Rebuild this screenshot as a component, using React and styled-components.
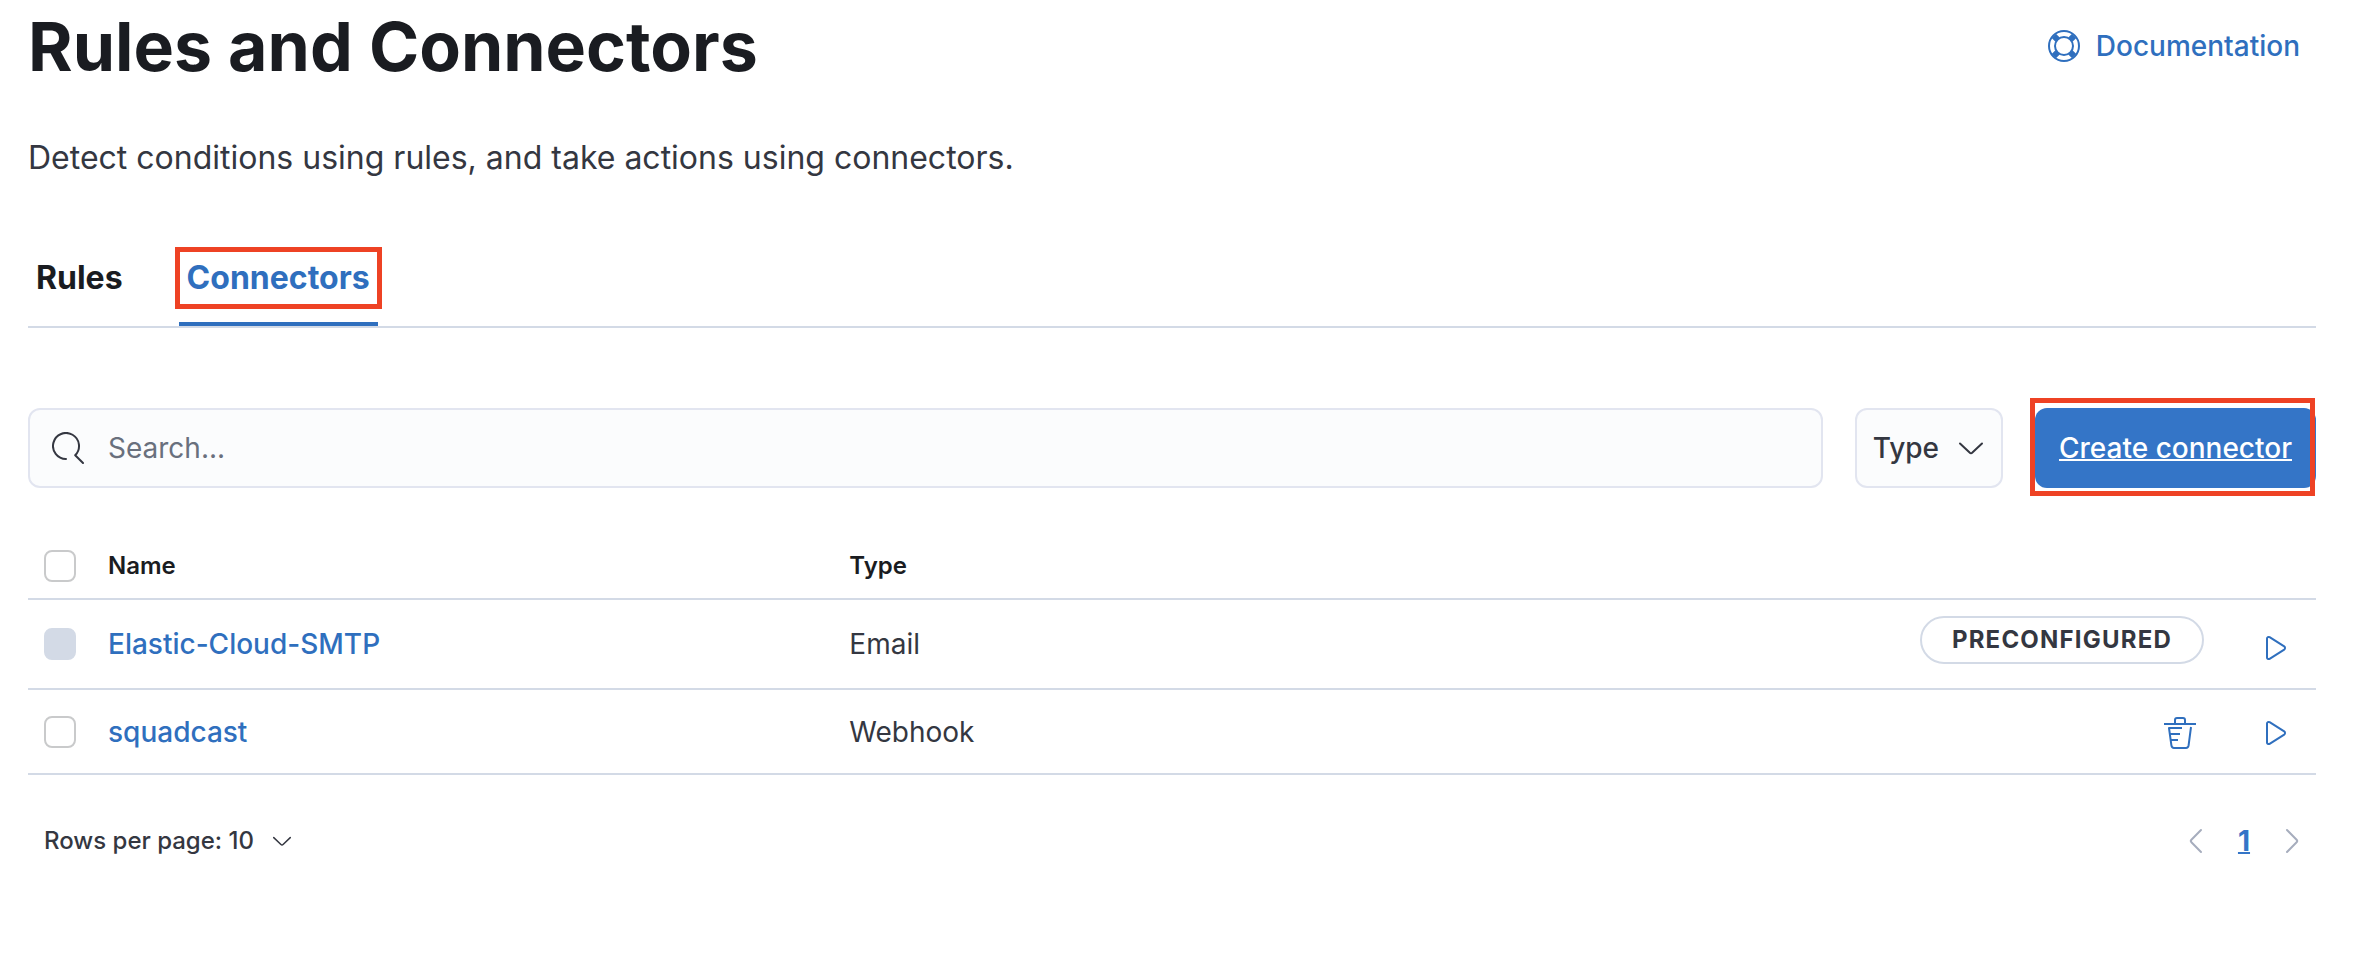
import React from "react";
import styled, { createGlobalStyle, css } from "styled-components";

const c = {
  ink: "#1a1c21",
  text: "#343741",
  subdued: "#69707d",
  link: "#2f6fbe",
  primary: "#3475c7",
  line: "#d3dae6",
  field: "#fbfcfd",
  fieldLine: "#e2e5f0",
  mark: "#ee4224",
};

const GlobalStyle = createGlobalStyle`
  *, *::before, *::after { box-sizing: border-box; }
  body { margin: 0; background: #fff; }
  body, button, input {
    font-family: Inter, "Liberation Sans", sans-serif;
    font-size: 28px;
    line-height: 40px;
    color: ${c.text};
  }
  button { margin: 0; padding: 0; border: 0; background: none; cursor: pointer; }
  svg { display: block; flex: none; }
`;

const Page = styled.main`
  padding: 6px 48px 48px 28px;
`;

const Header = styled.header`
  display: flex;
  align-items: center;
  justify-content: space-between;
  padding-right: 16px;
`;

const Title = styled.h1`
  margin: 0;
  font-size: 68px;
  line-height: 80px;
  font-weight: 700;
  color: ${c.ink};
`;

const DocLink = styled.a`
  display: flex;
  align-items: center;
  gap: 16px;
  font-weight: 500;
  color: ${c.link};
  text-decoration: none;
`;

const Description = styled.p`
  margin: 48px 0;
  font-size: 32px;
  line-height: 48px;
`;

const Tabs = styled.nav`
  display: flex;
  gap: 48px;
  border-bottom: 2px solid ${c.line};
`;

const Tab = styled.button`
  position: relative;
  height: 96px;
  padding: 0 8px;
  font-size: 32px;
  font-weight: 700;
  color: ${(p) => (p.$active ? c.link : c.ink)};
  ${(p) => p.$active && css`box-shadow: inset 0 -4px 0 ${c.link};`}
`;

const Mark = styled.span`
  position: absolute;
  inset: ${(p) => p.$inset};
  border: 5px solid ${c.mark};
  pointer-events: none;
`;

const Toolbar = styled.div`
  display: flex;
  gap: 32px;
  margin-top: 80px;
`;

const fieldBox = css`
  display: flex;
  align-items: center;
  height: 80px;
  border: 2px solid ${c.fieldLine};
  border-radius: 12px;
  background: ${c.field};
`;

const SearchField = styled.label`
  ${fieldBox}
  flex: 1;
  gap: 24px;
  padding: 0 22px;
`;

const SearchInput = styled.input`
  flex: 1;
  min-width: 0;
  padding: 0;
  border: 0;
  outline: 0;
  background: none;
  &::placeholder { color: ${c.subdued}; opacity: 1; }
`;

const FilterButton = styled.button`
  ${fieldBox}
  gap: 16px;
  padding: 0 14px 0 16px;
  font-weight: 500;
`;

const CreateWrap = styled.div`
  position: relative;
`;

const CreateButton = styled.button`
  height: 80px;
  padding: 0 24px;
  border-radius: 12px;
  background: ${c.primary};
  color: #fff;
  font-weight: 500;
  text-decoration: underline;
  text-decoration-thickness: 2px;
`;

const Table = styled.table`
  width: 100%;
  margin-top: 46px;
  border-collapse: separate;
  border-spacing: 0;
  table-layout: fixed;
`;

const cell = css`
  padding: 0 16px;
  border-bottom: 2px solid ${c.line};
  text-align: left;
`;

const Th = styled.th`
  ${cell}
  width: ${(p) => p.$width || "auto"};
  height: 66px;
  font-size: 24px;
  font-weight: 600;
  color: ${c.ink};
`;

const Td = styled.td`
  ${cell}
  height: ${(p) => (p.$tall ? 90 : 85)}px;
`;

const ActionTd = styled(Td)`
  vertical-align: bottom;
  padding-bottom: 24px;
`;

const Actions = styled.div`
  display: flex;
  align-items: flex-end;
  justify-content: flex-end;
  gap: 48px;
`;

const Checkbox = styled.input`
  appearance: none;
  display: block;
  width: 32px;
  height: 32px;
  margin: 0;
  border: 2px solid #c9cacb;
  border-radius: 8px;
  background: #fff;
  &:disabled { border-color: ${c.line}; background: ${c.line}; }
`;

const NameLink = styled.a`
  font-weight: 500;
  color: ${c.link};
  text-decoration: none;
`;

const Badge = styled.span`
  height: 48px;
  padding: 0 30px;
  border: 2px solid ${c.line};
  border-radius: 24px;
  font-size: 24px;
  line-height: 44px;
  font-weight: 700;
  letter-spacing: 0.05em;
  text-transform: uppercase;
`;

const IconButton = styled.button`
  padding: 0 8px;
  color: ${c.link};
`;

const Footer = styled.footer`
  display: flex;
  align-items: center;
  justify-content: space-between;
  margin-top: 42px;
  padding-left: 16px;
`;

const RowsButton = styled.button`
  display: flex;
  align-items: center;
  gap: 16px;
  height: 48px;
  font-size: 24px;
  font-weight: 500;
`;

const Pager = styled.nav`
  display: flex;
`;

const PageButton = styled.button`
  display: flex;
  align-items: center;
  justify-content: center;
  width: 48px;
  height: 48px;
  color: ${(p) => (p.$current ? c.primary : "#a6adbd")};
  font-weight: 700;
  text-decoration: ${(p) => (p.$current ? "underline" : "none")};
  text-decoration-thickness: 2px;
`;

const Icon = ({ size = 32, children }) => (
  <svg
    width={size}
    height={size}
    viewBox="0 0 32 32"
    fill="none"
    stroke="currentColor"
    strokeWidth="2"
    strokeLinecap="round"
    strokeLinejoin="round"
    aria-hidden="true"
  >
    {children}
  </svg>
);

const HelpIcon = () => (
  <Icon>
    <circle cx="16" cy="16" r="15" />
    <circle cx="16" cy="16" r="9" />
    <path
      strokeLinecap="butt"
      strokeWidth="6"
      d="M5.8 5.8l3.8 3.8M26.2 5.8l-3.8 3.8M5.8 26.2l3.8-3.8M26.2 26.2l-3.8-3.8"
    />
  </Icon>
);

const SearchIcon = () => (
  <Icon>
    <path d="M14 27A13 13 0 1 1 23.2 23.2L31 31" />
  </Icon>
);

const ChevronDown = ({ size = 32 }) => (
  <Icon size={size}>
    <path d="M5 11.5L14.6 20.6Q16 22 17.4 20.6L27 11.5" />
  </Icon>
);

const ChevronSide = ({ right }) => (
  <Icon>
    <path d={right ? "M11 5L20.6 14.8Q21.8 16 20.6 17.2L11 27" : "M21 5L11.4 14.8Q10.2 16 11.4 17.2L21 27"} />
  </Icon>
);

const PlayIcon = () => (
  <Icon>
    <path d="M7 6.6C7 5.2 8.4 4.5 9.6 5.2L24.2 14.4C25.3 15.2 25.3 16.8 24.2 17.6L9.6 26.8C8.4 27.5 7 26.8 7 25.4Z" />
  </Icon>
);

const TrashIcon = () => (
  <Icon>
    <path
      strokeLinecap="butt"
      d="M0 7H32M11 7V3Q11 1 13 1H19Q21 1 21 3V7M18 11H5L7.4 28.4Q7.8 31 10 31H22Q24.2 31 24.6 28.4L27 10M6 17H16M7 23H14"
    />
  </Icon>
);

const connectors = [
  { name: "Elastic-Cloud-SMTP", type: "Email", preconfigured: true },
  { name: "squadcast", type: "Webhook", preconfigured: false },
];

export default function App() {
  return (
    <>
      <GlobalStyle />
      <Page>
        <Header>
          <Title>Rules and Connectors</Title>
          <DocLink href="#docs">
            <HelpIcon />
            Documentation
          </DocLink>
        </Header>
        <Description>Detect conditions using rules, and take actions using connectors.</Description>

        <Tabs>
          <Tab type="button">Rules</Tab>
          <Tab type="button" $active aria-current="page">
            Connectors
            <Mark $inset="17px -4px 17px -4px" />
          </Tab>
        </Tabs>

        <Toolbar>
          <SearchField>
            <SearchIcon />
            <SearchInput type="text" placeholder="Search..." aria-label="Search connectors" />
          </SearchField>
          <FilterButton type="button">
            Type
            <ChevronDown />
          </FilterButton>
          <CreateWrap>
            <CreateButton type="button">Create connector</CreateButton>
            <Mark $inset="-10px 1px -8px -5px" />
          </CreateWrap>
        </Toolbar>

        <Table>
          <thead>
            <tr>
              <Th $width="64px">
                <Checkbox type="checkbox" aria-label="Select all rows" />
              </Th>
              <Th>Name</Th>
              <Th>Type</Th>
              <Th aria-label="Actions" />
            </tr>
          </thead>
          <tbody>
            {connectors.map(({ name, type, preconfigured }) => (
              <tr key={name}>
                <Td $tall={preconfigured}>
                  <Checkbox type="checkbox" disabled={preconfigured} aria-label={`Select ${name}`} />
                </Td>
                <Td $tall={preconfigured}>
                  <NameLink href="#connector">{name}</NameLink>
                </Td>
                <Td $tall={preconfigured}>{type}</Td>
                <ActionTd $tall={preconfigured}>
                  <Actions>
                    {preconfigured ? (
                      <Badge>Preconfigured</Badge>
                    ) : (
                      <IconButton type="button" aria-label={`Delete ${name}`}>
                        <TrashIcon />
                      </IconButton>
                    )}
                    <IconButton type="button" aria-label={`Run ${name}`}>
                      <PlayIcon />
                    </IconButton>
                  </Actions>
                </ActionTd>
              </tr>
            ))}
          </tbody>
        </Table>

        <Footer>
          <RowsButton type="button">
            Rows per page: 10
            <ChevronDown size={24} />
          </RowsButton>
          <Pager aria-label="Pagination">
            <PageButton type="button" aria-label="Previous page">
              <ChevronSide />
            </PageButton>
            <PageButton type="button" $current aria-current="page">1</PageButton>
            <PageButton type="button" aria-label="Next page">
              <ChevronSide right />
            </PageButton>
          </Pager>
        </Footer>
      </Page>
    </>
  );
}
